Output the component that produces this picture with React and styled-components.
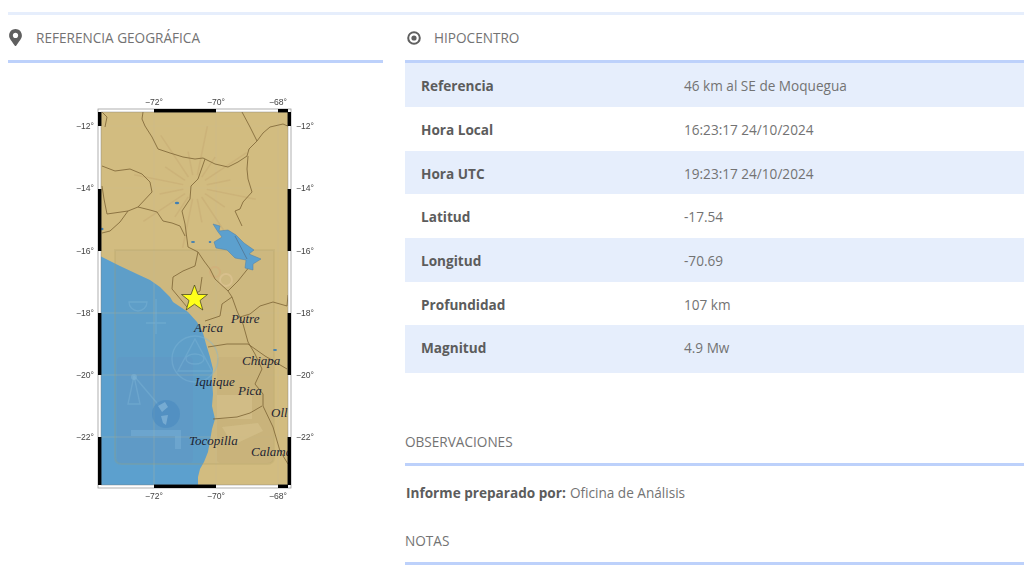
import React from 'react';
import styled, { createGlobalStyle } from 'styled-components';
import { FaMapMarkerAlt } from 'react-icons/fa';

const GlobalStyle = createGlobalStyle`
  html, body {
    margin: 0;
    padding: 0;
    background: #fff;
    overflow: hidden;
  }
  body {
    font-family: "Open Sans", "Liberation Sans", sans-serif;
    font-size: 13.6px;
    color: #6b6b6b;
  }
`;

const Page = styled.div`
  width: 1024px;
  height: 576px;
  overflow: hidden;
  padding: 12px 0 0 8px;
  box-sizing: border-box;
`;

const TopRule = styled.div`
  height: 3px;
  background: #e6eefc;
`;

const Columns = styled.div`
  display: grid;
  grid-template-columns: 375px 619px;
  column-gap: 22px;
`;

const Heading = styled.div`
  display: flex;
  align-items: center;
  height: ${(p) => p.$height}px;
  gap: 12px;
  border-bottom: 3.6px solid #bdd1fb;
  font-size: 13.6px;
  text-transform: uppercase;
  color: #737373;
`;

const PinIcon = styled(FaMapMarkerAlt)`
  color: #5f5f5f;
  flex: none;
  margin-left: -1px;
`;

const DotIcon = styled.svg`
  flex: none;
  margin-left: 2px;
  margin-right: 1px;
  color: #5f5f5f;
`;

const MapBox = styled.div`
  padding: 26px 0 0 62px;
  svg {
    display: block;
    filter: blur(0.35px);
  }
`;

const Table = styled.table`
  width: 100%;
  border-collapse: collapse;
  font-size: 13.6px;
  tr:nth-child(odd) {
    background: #e6eefc;
  }
  th, td {
    height: 42.7px;
    padding: 1px 0 0;
    text-align: left;
  }
  tr:last-child th, tr:last-child td {
    padding-bottom: 4px;
  }
  th {
    width: 263px;
    padding-left: 16px;
    font-weight: 700;
    color: #5c5c5c;
  }
  td {
    color: #737373;
  }
`;

const Notes = styled.div`
  padding-top: 47.4px;
`;

const Line = styled.p`
  display: flex;
  align-items: center;
  gap: 0.3em;
  margin: 0;
  height: 53.3px;
  padding-left: 1px;
  font-size: 13.6px;
  color: #737373;
  b {
    color: #5c5c5c;
  }
`;

const rows = [
  ['Referencia', '46 km al SE de Moquegua'],
  ['Hora Local', '16:23:17 24/10/2024'],
  ['Hora UTC', '19:23:17 24/10/2024'],
  ['Latitud', '-17.54'],
  ['Longitud', '-70.69'],
  ['Profundidad', '107 km'],
  ['Magnitud', '4.9 Mw'],
];

const borders = [
  'M143 113 L142 120 L145 127 L152 138 L158 150 L170 154 L183 158 L195 160 L203 159 L215 165 L228 168 L238 163 L247 157 L249 150 L257 142 L263 134 L270 128 L283 125 L290 128',
  'M242 113 L250 128 L257 142',
  'M205 160 L198 180 L191 187 L190 200 L182 212 L185 225 L188 248 L198 253 L204 262 L210 270 L215 280 L228 292 L232 298 L222 305 L220 317 L205 322',
  'M248 157 L247 170 L248 180 L252 193 L243 203 L240 210 L235 212 L242 227',
  'M250 267 L238 282 L228 292',
  'M102 167 L115 172 L130 170 L142 175 L150 183 L152 193 L138 208 L128 212 L107 215 L104 200 L102 187',
  'M138 208 L150 211 L157 213 L163 222 L172 224 L180 227 L185 237',
  'M128 212 L120 223 L110 232 L102 234',
  'M198 253 L195 267 L183 272 L173 278 L172 290 L187 308',
  'M202 278 L200 292 L192 296',
  'M232 298 L237 312 L243 325 L248 343 L255 355 L262 370 L255 385 L263 395 L263 407 L273 428 L280 452 L288 465',
  'M208 348 L227 345 L248 345 L265 357 L287 370',
  'M213 420 L237 418 L250 414 L262 407',
  'M240 318 L250 315 L260 307 L273 303 L287 307 L288 296',
  'M102 113 L107 118 L105 128',
];

const burst = Array.from({ length: 16 }, (_, i) => {
  const a = (i * Math.PI) / 8 + 0.2;
  const r = i % 2 ? 36 : 62;
  return [195 + Math.cos(a) * 12, 188 + Math.sin(a) * 12, 195 + Math.cos(a) * r, 188 + Math.sin(a) * r];
});

const xTicks = [[154, '−72'], [216, '−70'], [278, '−68']];
const yTicks = [[127, '−12'], [189, '−14'], [252, '−16'], [314, '−18'], [376, '−20'], [438, '−22']];
const sideBlack = [[113, 127], [190, 252], [314, 376], [438, 486]];

const places = [
  ['Arica', 194, 333],
  ['Putre', 231, 324],
  ['Chiapa', 242, 366],
  ['Iquique', 195, 387],
  ['Pica', 238, 396],
  ['Oll', 271, 418],
  ['Tocopilla', 189, 446],
  ['Calama', 251, 457],
];

function PeruMap() {
  return (
    <svg width="250" height="420" viewBox="70 90 250 420">
      <defs>
        <clipPath id="mapClip">
          <rect x="101" y="113" width="187" height="373" />
        </clipPath>
      </defs>
      <g clipPath="url(#mapClip)">
        <rect x="101" y="113" width="187" height="373" fill="#d2bc80" />
        <path d="M100 257 L110 262 L120 267 L137 275 L150 281 L160 288 L170 298 L173 303 L188 313 L197 323 L203 334 L206 345 L210 358 L213 370 L212 380 L213 395 L212 407 L215 420 L212 430 L210 442 L208 453 L204 463 L200 470 L198 478 L198 488 L100 488 Z" fill="#5ca0ce" />
        {[154, 216, 278].map((x) => (
          <line key={x} x1={x} y1="113" x2={x} y2="486" stroke="#c9bd94" strokeOpacity=".45" strokeWidth=".7" />
        ))}
        {yTicks.map(([y]) => (
          <line key={y} x1="101" y1={y} x2="288" y2={y} stroke="#c9bd94" strokeOpacity=".4" strokeWidth=".7" />
        ))}

        <g stroke="#c4a56e" strokeOpacity=".4" strokeWidth="1.5">
          {burst.map(([x1, y1, x2, y2], i) => (
            <line key={i} x1={x1} y1={y1} x2={x2} y2={y2} />
          ))}
        </g>
        <path d="M115 251 H274 V458 Q274 465 267 465 H122 Q115 465 115 458 Z" fill="#8a8a70" fillOpacity=".06" stroke="#a89a60" strokeOpacity=".2" strokeWidth="2" />
        <rect x="117" y="358" width="76" height="106" rx="4" fill="#6a7fb8" fillOpacity=".1" />
        <rect x="217" y="358" width="56" height="106" rx="4" fill="#a98a5c" fillOpacity=".1" />
        <g fill="none" stroke="#7fb6d6" strokeOpacity=".4" strokeWidth="1.4">
          <circle cx="195" cy="360" r="23" />
          <path d="M195 340 L212 372 H178 Z" />
          <ellipse cx="195" cy="360" rx="9" ry="5" />
          <path d="M156 300 V335 M146 324 H166" />
          <path d="M129 303 A9 9 0 0 0 147 303 Z" />
          <path d="M134 377 L162 410 M134 377 L140 405 H128 Z" />
        </g>
        <circle cx="134" cy="378" r="3" fill="#7fb6d6" fillOpacity=".5" />
        <circle cx="166" cy="415" r="14" fill="#4a8bbf" fillOpacity=".6" />
        <path d="M158 407 L165 403 L168 408 L162 413 Z M161 417 L168 416 L166 426 L163 424 Z" fill="#7fb2d6" fillOpacity=".8" />
        <path d="M131 431 H181 V450 H175 V437 H131 Z" fill="#7cb4d8" fillOpacity=".45" />
        <path d="M217 396 H252 V420 H217 Z M222 428 L258 424 L263 432 L233 446 Z" fill="#e0cf9c" fillOpacity=".35" />
        <circle cx="215" cy="273" r="5" fill="none" stroke="#d8a878" strokeOpacity=".45" strokeWidth="2" />
        <circle cx="226" cy="281" r="6" fill="none" stroke="#dfc596" strokeOpacity=".6" strokeWidth="2" />

        <g fill="none" stroke="#856c3c" strokeWidth=".9" strokeLinejoin="round">
          {borders.map((d) => (
            <path key={d} d={d} />
          ))}
        </g>

        <path d="M213 225 L220 227 L219 232 L228 231 L236 236 L244 244 L254 251 L249 255 L261 260 L253 265 L253 271 L245 269 L246 261 L235 259 L227 251 L216 249 L214 243 L222 238 L218 233 Z" fill="#5ca0ce" stroke="#4d7fa8" strokeWidth=".5" />
        <path d="M235 237 L247 260" stroke="#4f6f8a" strokeWidth=".7" />
        <g fill="#3f7fb4">
          <ellipse cx="177" cy="204" rx="2.2" ry="1.2" />
          <ellipse cx="193" cy="243" rx="2" ry="1.1" />
          <ellipse cx="210" cy="243" rx="1.3" ry="1" />
          <ellipse cx="275" cy="351" rx="2" ry="1.1" />
          <ellipse cx="102" cy="230" rx="1.5" ry="1.2" />
        </g>

        <g fontFamily="'Liberation Serif', serif" fontStyle="italic" fontSize="13" fill="#1d2433">
          {places.map(([name, x, y]) => (
            <text key={name} x={x} y={y}>{name}</text>
          ))}
        </g>
      </g>

      <path d="M194.5 286 L198 295.5 L207.5 295.5 L200 301.5 L202.8 311 L194.5 305.2 L186.2 311 L189 301.5 L181.5 295.5 L191 295.5 Z" fill="#ffff1a" stroke="#3a3a20" strokeWidth=".7" />

      <rect x="98" y="110" width="193" height="379" fill="none" stroke="#9c9c9c" strokeWidth=".8" />
      <rect x="101" y="113" width="187" height="373" fill="none" stroke="#777" strokeWidth=".4" />
      <g fill="#000">
        <rect x="154" y="110" width="62" height="3.4" />
        <rect x="278" y="110" width="10" height="3.4" />
        <rect x="154" y="485.6" width="62" height="3.4" />
        <rect x="278" y="485.6" width="10" height="3.4" />
        {sideBlack.map(([a, b]) => (
          <g key={a}>
            <rect x="98" y={a} width="3.4" height={b - a} />
            <rect x="287.6" y={a} width="3.4" height={b - a} />
          </g>
        ))}
      </g>

      <g fontFamily="'Liberation Sans', sans-serif" fontSize="8.6" fill="#444">
        {xTicks.map(([x, t]) => (
          <g key={x}>
            <text x={x} y="106" textAnchor="middle">{t}°</text>
            <text x={x} y="500" textAnchor="middle">{t}°</text>
          </g>
        ))}
        {yTicks.map(([y, t]) => (
          <g key={y}>
            <text x="94" y={y + 3} textAnchor="end">{t}°</text>
            <text x="296" y={y + 3}>{t}°</text>
          </g>
        ))}
      </g>
    </svg>
  );
}

export default function App() {
  return (
    <Page>
      <GlobalStyle />
      <TopRule />
      <Columns>
        <section>
          <Heading $height={45.3}>
            <PinIcon size={17} />
            <span>Referencia geográfica</span>
          </Heading>
          <MapBox>
            <PeruMap />
          </MapBox>
        </section>
        <section>
          <Heading $height={45.3}>
            <DotIcon width="14" height="14" viewBox="0 0 14 14">
              <circle cx="7" cy="7" r="5.8" fill="none" stroke="currentColor" strokeWidth="2" />
              <circle cx="7" cy="7" r="2.6" fill="currentColor" />
            </DotIcon>
            <span>Hipocentro</span>
          </Heading>
          <Table>
            <tbody>
              {rows.map(([label, value]) => (
                <tr key={label}>
                  <th>{label}</th>
                  <td>{value}</td>
                </tr>
              ))}
            </tbody>
          </Table>
          <Notes>
            <Heading $height={42.6}>Observaciones</Heading>
            <Line><b>Informe preparado por:</b> Oficina de Análisis</Line>
            <Heading $height={43}>Notas</Heading>
          </Notes>
        </section>
      </Columns>
    </Page>
  );
}
